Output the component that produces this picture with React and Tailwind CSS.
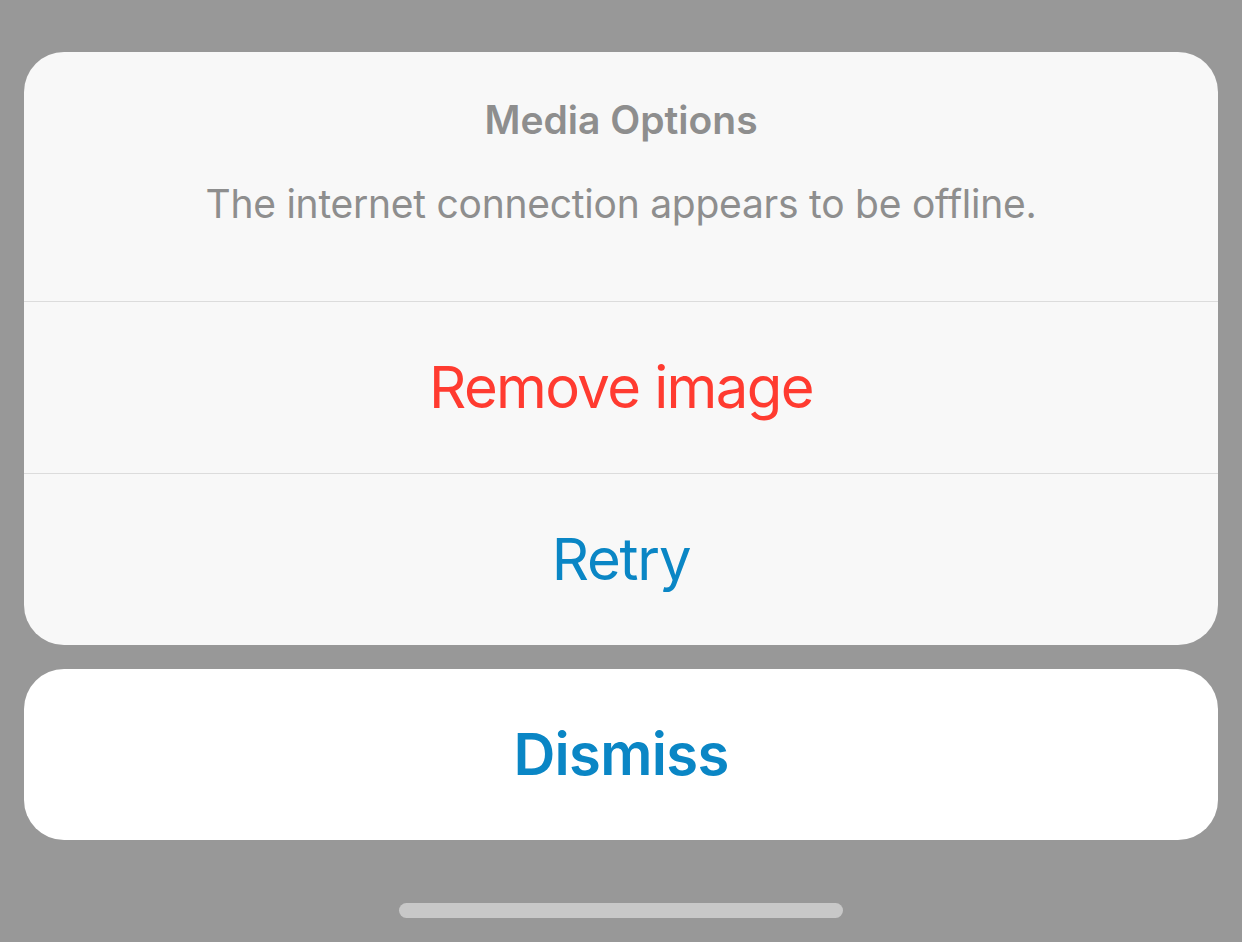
export default function App() {
  const font = { fontFamily: 'Inter, "Noto Sans", sans-serif' };
  return (
    <div className="w-[1242px] h-[942px] bg-[#989898] flex flex-col px-[24px] pt-[52px]" style={font}>
      <div className="bg-[#f8f8f8] rounded-[40px] overflow-hidden flex flex-col">
        <div className="h-[249px] flex flex-col items-center pt-[44px]">
          <div className="text-[39px] leading-[48px] font-semibold text-[#8e8e8e]">Media Options</div>
          <div className="mt-[36px] text-[39px] leading-[48px] tracking-[-0.25px] text-[#8e8e8e]">The internet connection appears to be offline.</div>
        </div>
        <div className="h-[1px] bg-[#dcdcdc]" />
        <button className="h-[171px] flex items-center justify-center text-[58px] tracking-[-1.6px] text-[#ff3b30]">Remove image</button>
        <div className="h-[1px] bg-[#dcdcdc]" />
        <button className="h-[171px] flex items-center justify-center text-[58px] tracking-[-1.2px] text-[#0a86c5]">Retry</button>
      </div>
      <button className="mt-[24px] h-[171px] bg-white rounded-[40px] flex items-center justify-center text-[58px] tracking-[-0.7px] font-semibold text-[#0a86c5]">Dismiss</button>
      <div className="mt-[63px] self-center w-[444px] h-[15px] rounded-full bg-[#c8c8c8]" />
    </div>
  );
}
